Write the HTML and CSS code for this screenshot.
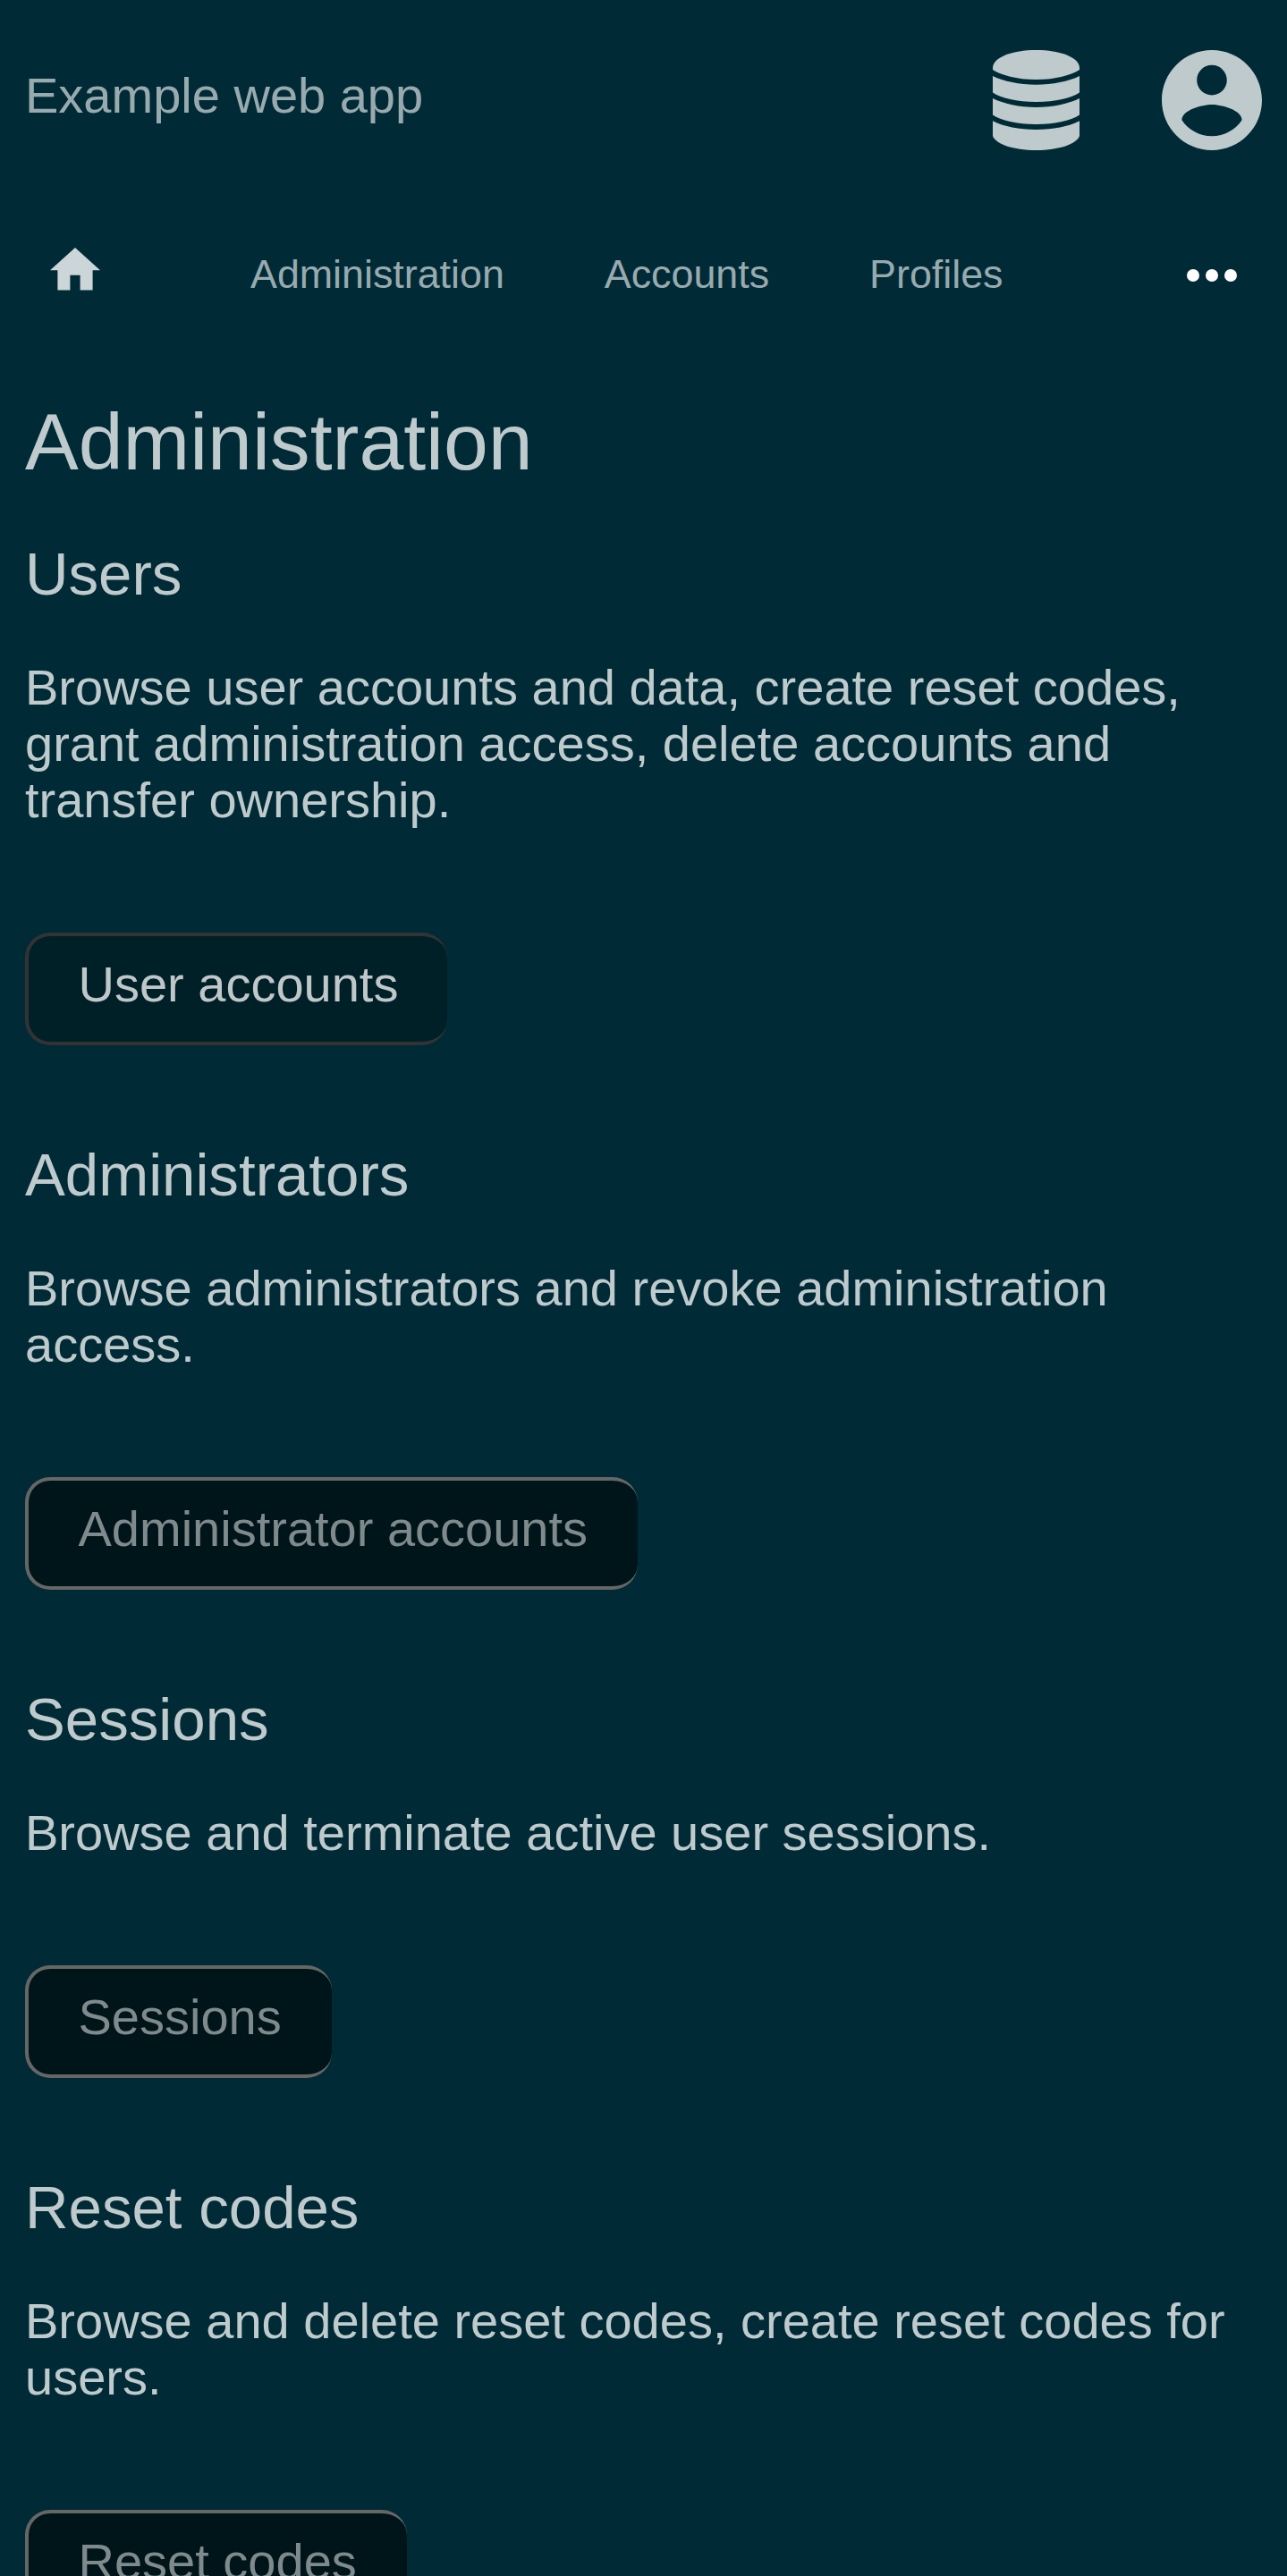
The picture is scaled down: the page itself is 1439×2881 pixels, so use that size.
FILE: index.html
```html
<!DOCTYPE html>
<html lang="en">
<head>
<meta charset="utf-8">
<title>Administration</title>
<link rel="stylesheet" href="styles.css">
</head>
<body>
<header class="header">
  <a class="brand">Example web app</a>
  <div class="header-icons">
    <svg class="icon-db" viewBox="0 0 97 112"><path d="M0 20C0 8 22 0 48.500 0S97 8 97 20V22C88 28 70 33 48.500 33S9 28 0 22Z"/><path d="M0 29C12 35 30 38.700 48.500 38.700S85 35 97 29V47.500C88 53.500 70 58 48.500 58S9 53.500 0 47.500Z"/><path d="M0 54C12 60 30 64 48.500 64S85 60 97 54V72.500C88 78.500 70 83 48.500 83S9 78.500 0 72.500Z"/><path d="M0 79.300C12 85.500 30 89 48.500 89S85 85.500 97 79.300V96C94 105 74 112 48.500 112S3 105 0 96Z"/></svg>
    <svg class="icon-user" viewBox="2 2 20 20"><path d="M12 2C6.480 2 2 6.480 2 12s4.480 10 10 10 10-4.480 10-10S17.520 2 12 2zm0 3c1.660 0 3 1.340 3 3s-1.340 3-3 3-3-1.340-3-3 1.340-3 3-3zm0 14.200c-2.500 0-4.710-1.280-6-3.220.030-1.990 4-3.080 6-3.080 1.990 0 5.970 1.090 6 3.080-1.290 1.940-3.500 3.220-6 3.220z"/></svg>
  </div>
</header>
<nav class="nav">
  <svg class="icon-home" viewBox="2 3 20 17"><path d="M10 20v-6h4v6h5v-8h3L12 3 2 12h3v8z"/></svg>
  <a>Administration</a>
  <a>Accounts</a>
  <a>Profiles</a>
  <svg class="icon-more" viewBox="0 0 56 14"><circle cx="7" cy="7" r="7"/><circle cx="28" cy="7" r="7"/><circle cx="49" cy="7" r="7"/></svg>
</nav>
<main class="main">
  <h1>Administration</h1>
  <section>
    <h2>Users</h2>
    <p>Browse user accounts and data, create reset codes, grant administration access, delete accounts and transfer ownership.</p>
    <a class="button active">User accounts</a>
  </section>
  <section>
    <h2>Administrators</h2>
    <p>Browse administrators and revoke administration access.</p>
    <a class="button">Administrator accounts</a>
  </section>
  <section>
    <h2>Sessions</h2>
    <p>Browse and terminate active user sessions.</p>
    <a class="button">Sessions</a>
  </section>
  <section>
    <h2>Reset codes</h2>
    <p>Browse and delete reset codes, create reset codes for users.</p>
    <a class="button">Reset codes</a>
  </section>
</main>
</body>
</html>
```
FILE: styles.css
```css
* { box-sizing: border-box; }
body {
  margin: 0;
  height: 2881px;
  overflow: hidden;
  background: #002b36;
  color: #bfcacd;
  font: 56px/63px "Liberation Sans", Arial, sans-serif;
}
svg { display: block; fill: #bfcacd; }
.header {
  display: flex;
  align-items: center;
  justify-content: space-between;
  height: 224px;
  padding: 0 28px;
}
.brand { color: #99aaaf; padding-bottom: 11px; }
.header-icons { display: flex; gap: 92px; }
.icon-db { width: 97px; height: 112px; }
.icon-user { width: 112px; height: 112px; }
.nav {
  display: flex;
  align-items: center;
  height: 168px;
  padding: 0 56px;
  color: #99aaaf;
  font-size: 44.8px;
  gap: 112px;
}
.nav a { padding-bottom: 3px; }
.icon-home { width: 56px; height: 47.6px; margin: 0 56px 14px 0; fill: #ccd5d7; }
.icon-more { width: 56px; height: 14px; margin-left: auto; fill: #fff; }
.main { padding: 51px 28px 0; }
h1, h2, p { margin: 0; font-weight: normal; }
h1 { font-size: 89.6px; line-height: 102px; margin-bottom: 58px; }
h2 { font-size: 67.2px; line-height: 77px; margin-bottom: 57px; }
p { margin-bottom: 117px; }
section { margin-bottom: 106px; }
.button {
  display: block;
  width: fit-content;
  height: 126px;
  padding: 22px 56px 0 55.5px;
  border: 4px solid #666;
  border-right: 0;
  border-radius: 28px;
  background: #001519;
  color: #7f8a8c;
}
.button.active {
  padding-right: 55px;
  border-color: #333;
  background: #002028;
  color: #bfc7c9;
}
```
